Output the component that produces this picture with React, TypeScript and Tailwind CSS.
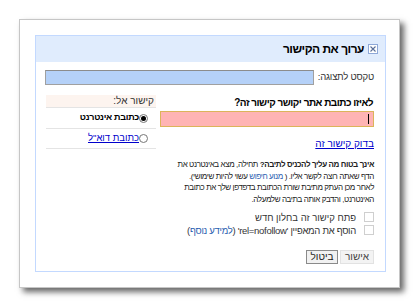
import React from "react";

const font = "font-['Liberation_Sans','DejaVu_Sans',Arial,sans-serif]";

function Radio({ checked }: { checked: boolean }) {
  return (
    <span className="w-[9px] h-[9px] rounded-full border border-[#777] bg-white flex items-center justify-center shrink-0">
      {checked && <span className="w-[5px] h-[5px] rounded-full bg-black" />}
    </span>
  );
}

function Checkbox() {
  return <span className="w-[10px] h-[10px] border border-[#cfcfcf] bg-white shrink-0" />;
}

export default function App() {
  return (
    <div className={`w-[420px] h-[307px] bg-white pt-[19px] pl-[19px] text-black ${font}`}>
      <div className="w-[381px] h-[269px] border border-[#c6c6c6] bg-white shadow-[4px_4px_6px_rgba(0,0,0,0.6)] pt-[15px] pl-[15px]">
        <div dir="rtl" className="w-[351px] h-[237px] border border-[#c3d9ff] bg-white flex flex-col">
          {/* Title bar */}
          <div className="h-[26px] bg-[#e0ecfd] flex items-center gap-[4px] pr-[7px]">
            <span className="w-[10px] h-[10px] border border-[#8ea8d8] bg-white flex items-center justify-center">
              <svg width="8" height="8" viewBox="0 0 8 8">
                <path d="M1.5 1.5 L6.5 6.5 M6.5 1.5 L1.5 6.5" stroke="#5a6f99" strokeWidth="1.1" />
              </svg>
            </span>
            <span className="text-[12px] tracking-[-0.5px] font-bold leading-none">ערוך את הקישור</span>
          </div>

          <div className="flex-1 pr-[11px] pl-[9px] flex flex-col">
            {/* Display text */}
            <div className="mt-[8px] flex items-center gap-[4px] h-[15px]">
              <span className="text-[9.5px] tracking-[-0.2px] text-[#333] whitespace-nowrap">טקסט לתצוגה:</span>
              <div className="flex-1 h-[15px] bg-[#b5d1f8] border border-[#a0a0a0] border-t-[#8c8c8c]" />
            </div>

            {/* Main */}
            <div className="mt-[10px] flex gap-[3px]">
              {/* Right section */}
              <div className="w-[215px] flex flex-col">
                <div className="h-[14px] mt-[1px] text-[10px] tracking-[-0.5px] font-bold leading-[14px] pr-[1px]">
                  לאיזו כתובת אתר יקושר קישור זה?
                </div>
                <div className="mt-[1px] h-[16px] w-[214px] bg-[#ffb4b4] border border-[#dcb45a] flex items-center pr-[4px]">
                  <span className="w-px h-[10px] bg-black" />
                </div>
                <div className="mt-[11px] h-[12px] text-[10px] leading-[12px]">
                  <span className="text-[#0000cc] underline">בדוק קישור זה</span>
                </div>
                <p className="mt-[9px] text-[8px] tracking-[-0.4px] leading-[11.7px] text-[#222] whitespace-nowrap">
                  <b>אינך בטוח מה עליך להכניס לתיבה?</b> תחילה, מצא באינטרנט את
                  <br />
                  הדף שאתה רוצה לקשר אליו. ( <span className="text-[#2a5db0]">מנוע חיפוש</span> עשוי להיות שימושי).
                  <br />
                  לאחר מכן העתק מתיבת שורת הכתובת בדפדפן שלך את כתובת
                  <br />
                  האינטרנט, והדבק אותה בתיבה שלמעלה.
                </p>
                <div className="mt-[6px] flex flex-col gap-[2px] text-[9.5px] text-[#333]">
                  <div className="h-[11px] flex items-center gap-[8px]">
                    <Checkbox />
                    <span className="leading-none">פתח קישור זה בחלון חדש</span>
                  </div>
                  <div className="h-[11px] flex items-center gap-[8px]">
                    <Checkbox />
                    <span className="leading-none whitespace-nowrap tracking-[-0.3px]">
                      הוסף את המאפיין 'rel=nofollow' (<span className="text-[#2a5db0]">למידע נוסף</span>)
                    </span>
                  </div>
                </div>
                <div className="mt-[14px] flex gap-[2px] text-[10px]">
                  <button className="h-[14px] w-[34px] bg-[#f3f3f3] border border-[#e2e2e2] text-[#444] leading-none">
                    אישור
                  </button>
                  <button className="h-[14px] w-[32px] bg-[#f1f1f1] border border-[#8a8a8a] text-[#222] leading-none">
                    ביטול
                  </button>
                </div>
              </div>

              {/* Left panel */}
              <div className="w-[110px] flex flex-col">
                <div className="h-[12px] bg-[#fdf4ef] text-[10px] leading-[12px] text-[#333] pr-[2px]">קישור אל:</div>
                <div className="h-[21px] border-t border-[#e4e4e4] bg-white flex items-center pr-[8px]">
                  <Radio checked />
                  <span className="text-[9px] tracking-[-0.3px] font-bold">כתובת אינטרנט</span>
                </div>
                <div className="h-[21px] border-t border-b border-[#e4e4e4] bg-white flex items-center pr-[8px]">
                  <Radio checked={false} />
                  <span className="text-[9.5px] text-[#0000cc] underline">כתובת דוא"ל</span>
                </div>
              </div>
            </div>
          </div>
        </div>
      </div>
    </div>
  );
}
